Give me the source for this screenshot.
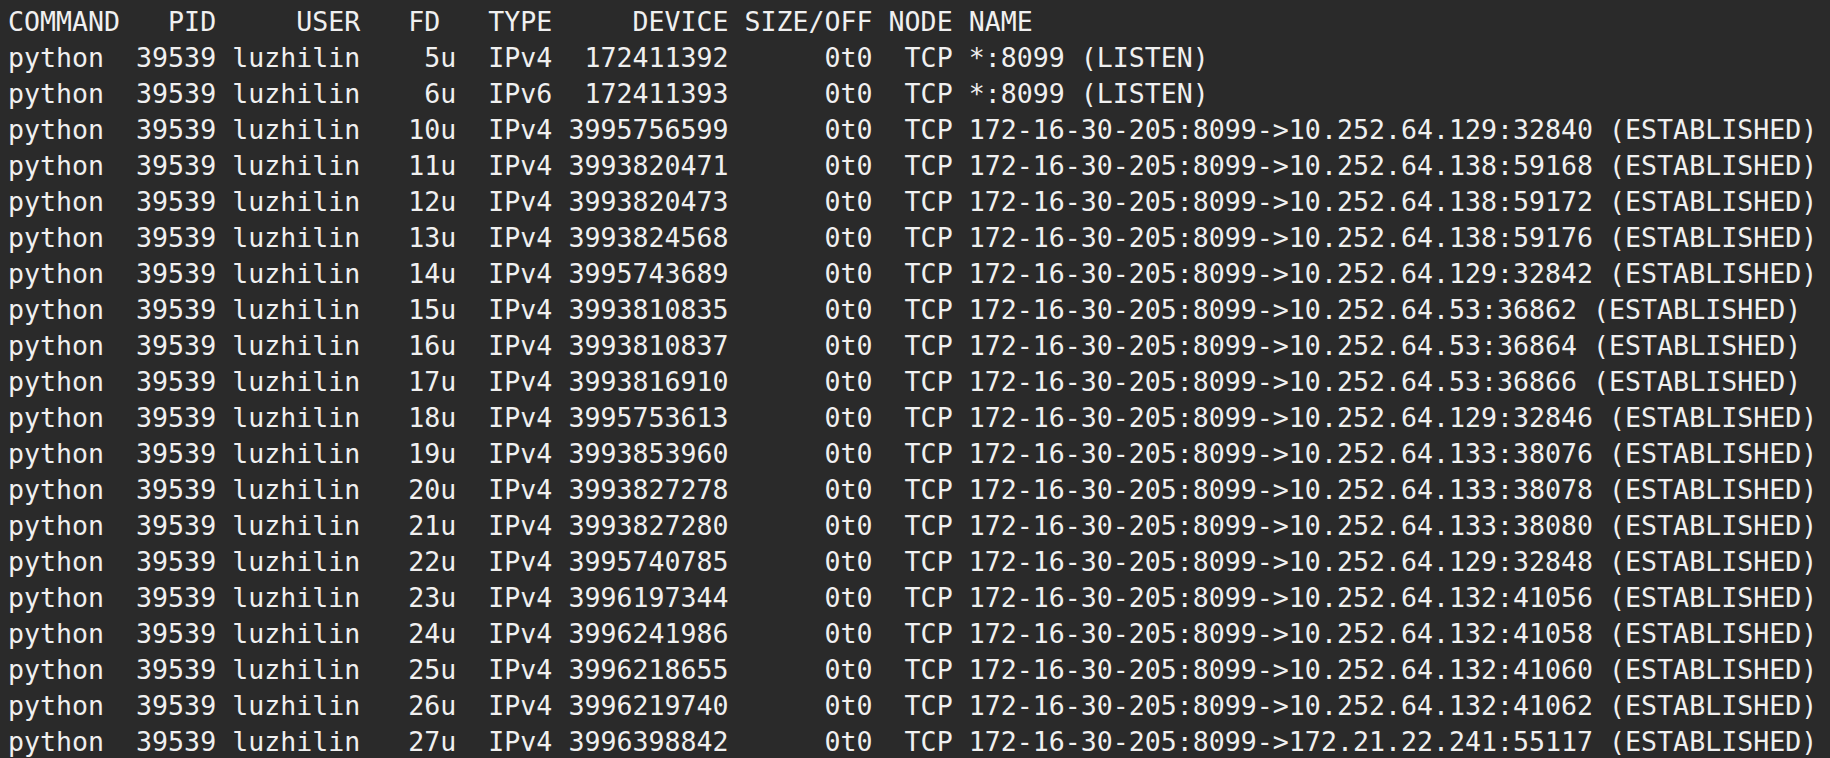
import React from "react";

const rows = [
  ["5u", "IPv4", "172411392", "*:8099 (LISTEN)"],
  ["6u", "IPv6", "172411393", "*:8099 (LISTEN)"],
  ["10u", "IPv4", "3995756599", "172-16-30-205:8099->10.252.64.129:32840 (ESTABLISHED)"],
  ["11u", "IPv4", "3993820471", "172-16-30-205:8099->10.252.64.138:59168 (ESTABLISHED)"],
  ["12u", "IPv4", "3993820473", "172-16-30-205:8099->10.252.64.138:59172 (ESTABLISHED)"],
  ["13u", "IPv4", "3993824568", "172-16-30-205:8099->10.252.64.138:59176 (ESTABLISHED)"],
  ["14u", "IPv4", "3995743689", "172-16-30-205:8099->10.252.64.129:32842 (ESTABLISHED)"],
  ["15u", "IPv4", "3993810835", "172-16-30-205:8099->10.252.64.53:36862 (ESTABLISHED)"],
  ["16u", "IPv4", "3993810837", "172-16-30-205:8099->10.252.64.53:36864 (ESTABLISHED)"],
  ["17u", "IPv4", "3993816910", "172-16-30-205:8099->10.252.64.53:36866 (ESTABLISHED)"],
  ["18u", "IPv4", "3995753613", "172-16-30-205:8099->10.252.64.129:32846 (ESTABLISHED)"],
  ["19u", "IPv4", "3993853960", "172-16-30-205:8099->10.252.64.133:38076 (ESTABLISHED)"],
  ["20u", "IPv4", "3993827278", "172-16-30-205:8099->10.252.64.133:38078 (ESTABLISHED)"],
  ["21u", "IPv4", "3993827280", "172-16-30-205:8099->10.252.64.133:38080 (ESTABLISHED)"],
  ["22u", "IPv4", "3995740785", "172-16-30-205:8099->10.252.64.129:32848 (ESTABLISHED)"],
  ["23u", "IPv4", "3996197344", "172-16-30-205:8099->10.252.64.132:41056 (ESTABLISHED)"],
  ["24u", "IPv4", "3996241986", "172-16-30-205:8099->10.252.64.132:41058 (ESTABLISHED)"],
  ["25u", "IPv4", "3996218655", "172-16-30-205:8099->10.252.64.132:41060 (ESTABLISHED)"],
  ["26u", "IPv4", "3996219740", "172-16-30-205:8099->10.252.64.132:41062 (ESTABLISHED)"],
  ["27u", "IPv4", "3996398842", "172-16-30-205:8099->172.21.22.241:55117 (ESTABLISHED)"],
];

const header =
  "COMMAND   PID     USER   FD   TYPE     DEVICE SIZE/OFF NODE NAME";

// lsof pads every column to a fixed width
const formatRow = ([fd, type, device, name]) =>
  "python  39539 luzhilin   " +
  fd.padStart(3) +
  "  " +
  type +
  " " +
  device.padStart(10) +
  "      0t0  TCP " +
  name;

export default function App() {
  const lines = [header, ...rows.map(formatRow)];

  return (
    <div className="w-[1830px] h-[758px] overflow-hidden bg-[#2a2a2a] text-[#f0f0f0]">
      <div className="pt-[4px] pl-[8px] font-['DejaVu_Sans_Mono',monospace] text-[26.6px] leading-[36px] whitespace-pre">
        {lines.map((line, i) => (
          <div key={i}>{line}</div>
        ))}
      </div>
    </div>
  );
}
